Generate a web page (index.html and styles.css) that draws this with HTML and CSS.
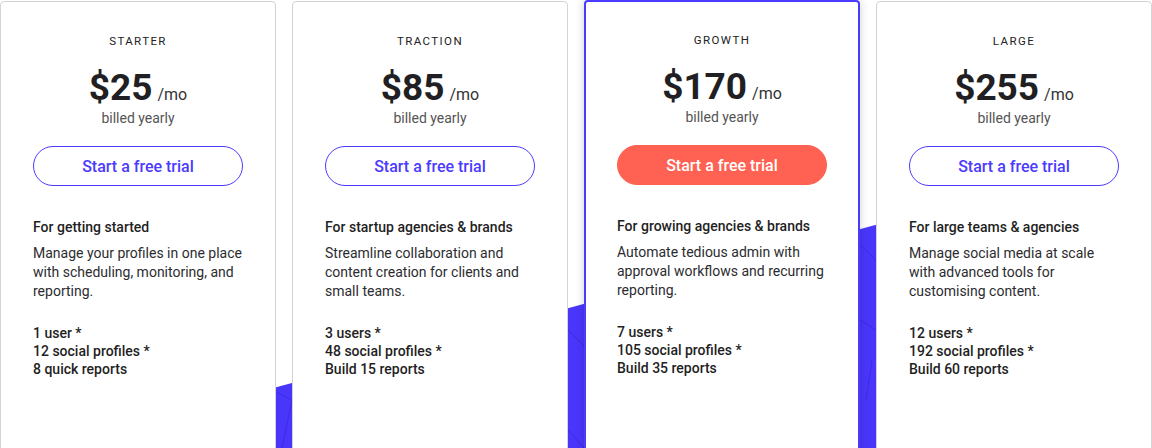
FILE: index.html
```html
<!DOCTYPE html>
<html lang="en">
<head>
<meta charset="utf-8">
<title>Pricing</title>
<link rel="stylesheet" href="styles.css">
</head>
<body>
<main class="page">
  <svg class="bg" width="1152" height="448" viewBox="0 0 1152 448" aria-hidden="true">
    <polygon points="0,462 1152,150 1152,448 0,448" fill="#4a36fb"/>
    <g stroke="#3a28d8" stroke-width="0.8" fill="none">
      <polyline points="276,392 292,400 282,448"/>
      <polyline points="568,330 584,346"/>
      <polyline points="568,430 584,448"/>
      <polyline points="860,245 876,260"/>
      <polyline points="860,320 876,330"/>
      <polyline points="872,360 866,400"/>
    </g>
  </svg>
  <section class="plans">
    <article class="card">
      <h2 class="tier">STARTER</h2>
      <div class="price"><span class="amount">$25</span><span class="per">/mo</span></div>
      <p class="billed">billed yearly</p>
      <a class="btn" href="#">Start a free trial</a>
      <h3 class="for">For getting started</h3>
      <p class="desc">Manage your profiles in one place with scheduling, monitoring, and reporting.</p>
      <ul class="feats">
        <li>1 user *</li>
        <li>12 social profiles *</li>
        <li>8 quick reports</li>
      </ul>
    </article>
    <article class="card">
      <h2 class="tier">TRACTION</h2>
      <div class="price"><span class="amount">$85</span><span class="per">/mo</span></div>
      <p class="billed">billed yearly</p>
      <a class="btn" href="#">Start a free trial</a>
      <h3 class="for">For startup agencies &amp; brands</h3>
      <p class="desc">Streamline collaboration and content creation for clients and small teams.</p>
      <ul class="feats">
        <li>3 users *</li>
        <li>48 social profiles *</li>
        <li>Build 15 reports</li>
      </ul>
    </article>
    <article class="card featured">
      <h2 class="tier">GROWTH</h2>
      <div class="price"><span class="amount">$170</span><span class="per">/mo</span></div>
      <p class="billed">billed yearly</p>
      <a class="btn btn-solid" href="#">Start a free trial</a>
      <h3 class="for">For growing agencies &amp; brands</h3>
      <p class="desc">Automate tedious admin with approval workflows and recurring reporting.</p>
      <ul class="feats">
        <li>7 users *</li>
        <li>105 social profiles *</li>
        <li>Build 35 reports</li>
      </ul>
    </article>
    <article class="card">
      <h2 class="tier">LARGE</h2>
      <div class="price"><span class="amount">$255</span><span class="per">/mo</span></div>
      <p class="billed">billed yearly</p>
      <a class="btn" href="#">Start a free trial</a>
      <h3 class="for">For large teams &amp; agencies</h3>
      <p class="desc">Manage social media at scale with advanced tools for customising content.</p>
      <ul class="feats">
        <li>12 users *</li>
        <li>192 social profiles *</li>
        <li>Build 60 reports</li>
      </ul>
    </article>
  </section>
</main>
</body>
</html>
```
FILE: styles.css
```css
* { box-sizing: border-box; }
html, body { margin: 0; padding: 0; background: #fff; }
body {
  font-family: Roboto, "Liberation Sans", sans-serif;
  color: #1f1f24;
  overflow: hidden;
}
.page {
  position: relative;
  width: 1152px;
  height: 448px;
  overflow: hidden;
}
.bg {
  position: absolute;
  left: 0;
  top: 0;
}
.plans {
  position: relative;
  display: grid;
  grid-template-columns: repeat(4, 276px);
  column-gap: 16px;
  align-items: start;
}
.card {
  margin-top: 1px;
  height: 470px;
  background: #fff;
  border: 1px solid #d3d3d6;
  border-radius: 4px;
  padding: 31px 32px 0;
  display: flex;
  flex-direction: column;
}
.card.featured {
  margin-top: 0;
  border: 2px solid #4b3bff;
  box-shadow: 0 0 10px rgba(0,0,0,0.18);
  padding: 30px 31px 0;
}
.tier {
  margin: 0;
  text-align: center;
  font-size: 11.5px;
  font-weight: 400;
  letter-spacing: 1.4px;
  line-height: 16px;
  color: #222;
}
.price {
  margin-top: 19px;
  display: flex;
  justify-content: center;
  align-items: baseline;
  gap: 5px;
  line-height: 40px;
}
.amount {
  font-size: 37px;
  font-weight: 700;
  color: #1f1f24;
}
.per {
  font-size: 16px;
  color: #333;
}
.billed {
  margin: -6px 0 0;
  text-align: center;
  font-size: 14px;
  line-height: 18px;
  color: #555;
}
.btn {
  margin-top: 19px;
  display: flex;
  align-items: center;
  justify-content: center;
  height: 40px;
  border: 1px solid #4b3bff;
  border-radius: 20px;
  color: #4b3bff;
  font-size: 16px;
  font-weight: 500;
  text-decoration: none;
}
.btn-solid {
  background: #ff6152;
  border-color: #ff6152;
  color: #fff;
}
.for {
  margin: 32px 0 0;
  font-size: 14px;
  font-weight: 500;
  line-height: 18px;
  color: #1f1f24;
}
.desc {
  margin: 8px 0 0;
  font-size: 14px;
  line-height: 19px;
  color: #2c2c30;
}
.feats {
  list-style: none;
  margin: 23px 0 0;
  padding: 0;
  font-size: 14px;
  font-weight: 500;
  line-height: 18px;
  color: #1f1f24;
}
```
